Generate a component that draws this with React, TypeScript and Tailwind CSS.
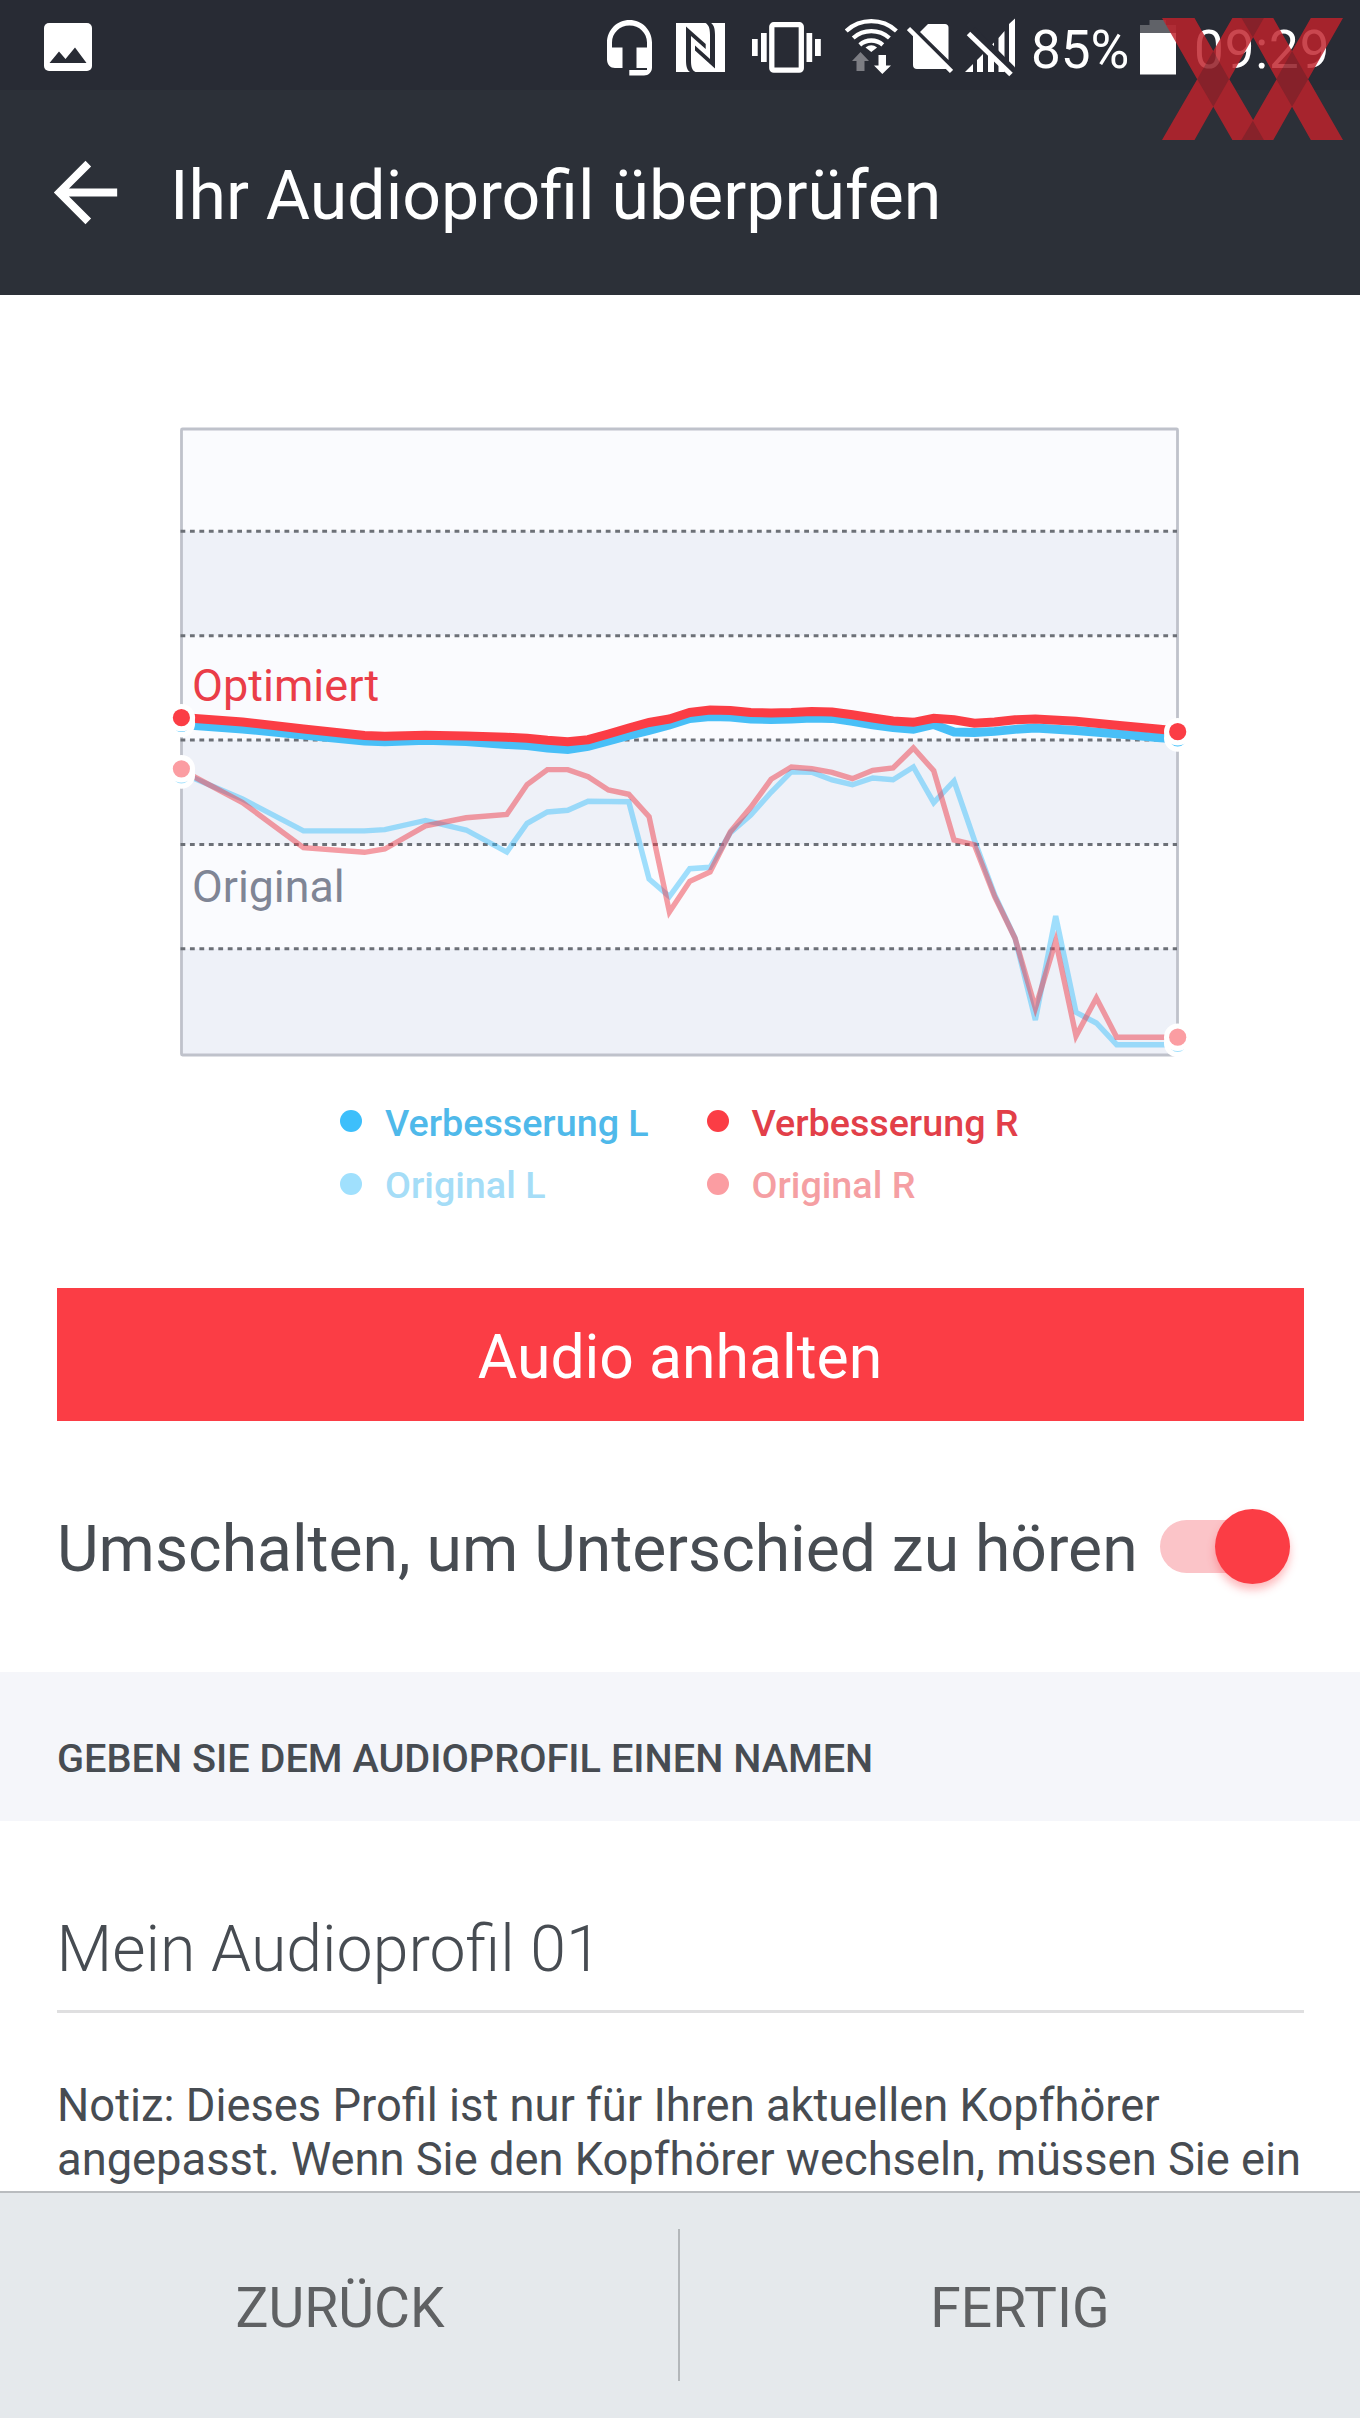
import { useState } from 'react';

const CHART_LEFT = 181.5;
const CHART_STEP = 20.33;

// [sample index, y] pairs, 50 samples across the chart
type Point = [number, number];

const improvedRight: Point[] = [
  [0, 717.5], [3, 722], [6, 729], [9, 735.5], [10, 736.3], [12, 735.3], [14, 736], [16, 737.3], [17, 738.3],
  [18, 740.3], [19, 741.7], [20, 739.7], [21, 734], [22, 728], [23, 722.5], [24, 719], [25, 712.5], [26, 710],
  [27, 710.5], [28, 712.5], [29, 713], [30, 712.5], [31, 711.5], [32, 712], [33, 714.7], [34, 718], [35, 721],
  [36, 722.3], [37, 718.3], [38, 719.7], [39, 723.3], [40, 722], [41, 719.8], [42, 719], [44, 721.3],
  [46, 725.3], [48, 729], [49, 731],
];

const improvedLeft: Point[] = [
  [0, 724.5], [3, 729], [6, 735], [9, 741], [10, 741.8], [12, 740.3], [14, 741.5], [16, 744.5], [17, 745.7],
  [18, 748], [19, 749.5], [20, 746.5], [21, 741], [22, 735.5], [23, 730.5], [24, 725], [25, 718.5], [26, 716.5],
  [27, 717], [28, 719], [29, 719.5], [30, 719.2], [31, 718], [32, 718.5], [33, 721.3], [34, 725], [35, 727.7],
  [36, 729.4], [37, 724.5], [38, 732], [39, 732.5], [40, 731.3], [41, 729.3], [42, 728], [44, 730.5],
  [46, 733.8], [48, 737.5], [49, 739],
];

const originalLeft: Point[] = [
  [0, 773], [3, 799], [6, 830.9], [9, 830.9], [10, 829.6], [12, 820.4], [14, 830], [16, 852], [17, 823.3],
  [18, 812], [19, 810.3], [20, 801.3], [22, 801.7], [23, 879], [24, 896.5], [25, 868.7], [26, 867.3],
  [27, 832.7], [28, 815], [29, 792.3], [30, 771.7], [31, 772.3], [32, 780], [33, 784.7], [34, 778], [35, 779.7],
  [36, 767], [37, 802.7], [38, 781], [39, 840], [40, 895], [41, 938], [42, 1020], [43, 916], [44, 1012.3],
  [45, 1023], [46, 1044.7], [49, 1044.7],
];

const originalRight: Point[] = [
  [0, 770], [3, 802.5], [6, 847.7], [9, 852.3], [10, 849], [12, 825.8], [14, 817.8], [16, 814.5], [17, 784.6],
  [18, 769.6], [19, 769.6], [20, 776.7], [21, 790], [22, 794.3], [23, 816.7], [24, 912], [25, 881.3],
  [26, 872], [27, 831.7], [28, 807.3], [29, 779.3], [30, 767], [31, 768.7], [32, 772.3], [33, 778.7],
  [34, 770.3], [35, 768], [36, 748], [37, 770.7], [38, 840], [39, 844.7], [40, 896.7], [41, 938.3],
  [42, 1008], [43, 941], [44, 1036], [45, 998], [46, 1037.2], [49, 1037.2],
];

const legend = [
  { label: 'Verbesserung L', dot: 'bg-[#3dbffb]', text: 'text-[#4fb9ea]' },
  { label: 'Verbesserung R', dot: 'bg-[#fb3d45]', text: 'text-[#e23f49]' },
  { label: 'Original L', dot: 'bg-[#a0e0fd]', text: 'text-[#a5ddf7]' },
  { label: 'Original R', dot: 'bg-[#fb9da2]', text: 'text-[#f59fa3]' },
];

const toPoints = (points: Point[]) => points.map(([i, y]) => `${CHART_LEFT + i * CHART_STEP},${y}`).join(' ');

function Marker({ x, y, lower, color, lowerColor }: { x: number; y: number; lower: number; color: string; lowerColor: string }) {
  return (
    <g>
      <circle cx={x} cy={lower} r="13.7" fill="#fff" />
      <circle cx={x} cy={lower} r="8.6" fill={lowerColor} />
      <circle cx={x} cy={y} r="13.7" fill="#fff" />
      <circle cx={x} cy={y} r="8.6" fill={color} />
    </g>
  );
}

function AudioChart() {
  return (
    <svg className="ml-40 mt-[125px] block h-[650px] w-[1040px]" viewBox="160 420 1040 650">
      <rect x="181.5" y="429" width="996" height="626" fill="#fafbfe" />
      <rect x="181.5" y="531.3" width="996" height="104.4" fill="#eef1f8" />
      <rect x="181.5" y="740" width="996" height="104.4" fill="#eef1f8" />
      <rect x="181.5" y="948.8" width="996" height="106" fill="#eef1f8" />
      <rect x="181.5" y="429" width="996" height="626" rx="1" fill="none" stroke="#bfc2cb" strokeWidth="2.8" />
      {[531.3, 635.7, 740, 844.4, 948.8].map((y) => (
        <line key={y} x1="180.5" x2="1177" y1={y} y2={y} stroke="#6c7077" strokeWidth="3" strokeDasharray="4.8 4.65" />
      ))}

      <g fill="none">
        <polyline points={toPoints(originalLeft)} stroke="#3dbffb" strokeOpacity="0.48" strokeWidth="5.4" />
        <polyline points={toPoints(originalRight)} stroke="#ee3d49" strokeOpacity="0.5" strokeWidth="5.4" />
        <polyline points={toPoints(improvedLeft)} stroke="#48bff7" strokeWidth="8.8" />
        <polyline points={toPoints(improvedRight)} stroke="#fb3d45" strokeWidth="9" />
      </g>

      <Marker x={181.4} y={717.7} lower={723.5} color="#fb3d45" lowerColor="#3dbffb" />
      <Marker x={1177.7} y={731.7} lower={738} color="#fb3d45" lowerColor="#3dbffb" />
      <Marker x={181.4} y={768.8} lower={775} color="#fb9da2" lowerColor="#a0e0fd" />
      <Marker x={1177.7} y={1037.2} lower={1043.5} color="#fb9da2" lowerColor="#a0e0fd" />

      <text x="192" y="701" fontSize="45" fill="#ea3d48">Optimiert</text>
      <text x="192" y="902" fontSize="44.7" fill="#7f8595">Original</text>
    </svg>
  );
}

function StatusBar() {
  return (
    <div className="flex h-[90px] shrink-0 bg-[#282b34] text-[53px] leading-[101px] text-white">
      {/* Picture notification */}
      <svg className="ml-11 h-[90px] w-12" viewBox="0 0 48 90">
        <rect y="23" width="48" height="48" rx="5" fill="#fff" />
        <path d="M5.5 63 15 51.5l6.5 7.5L31 47.5 42.5 63z" fill="#282b34" />
      </svg>

      {/* Headset */}
      <svg className="ml-[515px] h-[90px] w-[45px]" viewBox="0 0 45 90" fill="#fff">
        <path d="M22.5 20C10 20 0 30 0 42.5v17c0 5 3.5 8.5 8 8.5h7.5V47.5H5v-5c0-9.500 7.800-17 17.500-17S40 33 40 42.500v5H29.500V68H40v2H22.300v5.500H37c4.500 0 8-3.500 8-8v-25C45 30 35 20 22.500 20z" />
      </svg>

      {/* NFC */}
      <svg className="ml-6 h-[90px] w-[49px]" viewBox="0 0 49 90">
        <rect y="23" width="49" height="49" fill="#fff" />
        <path
          d="M10 26.5 29.7 44v5L15 36v25c0 5.5 1 9.5 4.5 11H14c-3-2-4-6-4-12zM39 68.5 19 50.5v-5L34 59V35c0-6-1-10-4.500-12H35c3 2 4 6 4 12z"
          fill="#282b34"
        />
      </svg>

      {/* Vibration */}
      <svg className="ml-[27px] h-[90px] w-[69px]" viewBox="0 0 69 90" fill="#fff">
        <rect x="19.8" y="24.7" width="29.5" height="45.5" rx="2" fill="none" stroke="#fff" strokeWidth="5.3" />
        <rect y="39" width="5.7" height="17" />
        <rect x="9" y="33" width="5.7" height="29" />
        <rect x="54.5" y="33" width="5.7" height="29" />
        <rect x="63" y="39" width="5.8" height="17" />
      </svg>

      {/* Wifi with traffic arrows */}
      <svg className="ml-6 h-[90px] w-[53px]" viewBox="0 0 53 90">
        <g fill="none" stroke="#fff" strokeWidth="4.3">
          <path d="M1.2 31a37 37 0 0 1 50.2 0" />
          <path d="M8.2 38a27.5 27.5 0 0 1 36.2 0" />
          <path d="M14.8 44.8a17.5 17.5 0 0 1 23 0" />
        </g>
        <path d="M20.5 47.5q5.8-4.5 11.6 0L26.3 52z" fill="#fff" />
        <path d="M15.5 52 24 61h-4.5v10h-8V61H7z" fill="#7c7d83" />
        <path d="M37.3 74 29 65.5h4.5V55H41v10.5h5z" fill="#fff" />
      </svg>

      {/* No SIM */}
      <svg className="ml-[9px] h-[90px] w-[46px]" viewBox="0 0 46 90">
        <path d="M6 34 41 69H10c-2.5 0-4-1.5-4-4zM13 32l8-8h17c2 0 3.5 1.5 3.5 3.5V60z" fill="#fff" />
        <path d="m1.5 28.5 43 43" stroke="#fff" strokeWidth="4.5" />
      </svg>

      {/* No signal */}
      <svg className="ml-3 h-[90px] w-[50px]" viewBox="0 0 50 90">
        <path d="M0 72l8-8v8zM12 72V60l6-6v18zM23 72V48.5l6-6V72zM33.5 72V38l6-7v41zM44 72V24l6-5.5V72z" fill="#fff" />
        <path d="m7 30.500 43 43" stroke="#282b34" strokeWidth="9" />
        <path d="m3.5 33.5 42.5 41" stroke="#fff" strokeWidth="5" />
      </svg>

      <span className="ml-4 w-[96px]">85%</span>

      {/* Battery */}
      <svg className="ml-[13px] h-[90px] w-9" viewBox="0 0 36 90">
        <path d="M0 25h9.5v-5H26v5h10v9H0z" fill="#606268" />
        <rect y="33" width="36" height="41.5" fill="#fff" />
      </svg>

      <span className="ml-[18px] tracking-[0.9px]">09:29</span>
    </div>
  );
}

// Overlapping XX badge in the top right corner
function Badge() {
  return (
    <svg className="absolute left-[1162px] top-[18px] h-[122px] w-[181px]" viewBox="0 0 540 366" preserveAspectRatio="none">
      <path
        d="M0 0H97L153 99 210 0H332L388 99 444 0H540L436 184 540 366H444L388 266 332 366H210L153 266 97 366H0L105 184zM201 184 272 306 342 184 272 58z"
        fill="#bf222b"
        fillOpacity="0.83"
        fillRule="evenodd"
      />
      <path d="M237 0h67l-33 58zM237 366h67l-33-58zM105 184l48-85 47 85-47 82zM341 184l47-85 48 85-48 82z" fill="#2a1a24" fillOpacity="0.25" />
    </svg>
  );
}

export default function App() {
  const [enabled, setEnabled] = useState(true);
  const [name, setName] = useState('Mein Audioprofil 01');

  return (
    <div className="relative flex h-[2418px] w-[1360px] flex-col overflow-hidden bg-white font-['Roboto',sans-serif] text-[#474c52]">
      <StatusBar />
      <header className="flex h-[205px] shrink-0 items-center bg-[#2c3038] pl-[38px] text-white">
        <svg className="h-[95px] w-[95px]" viewBox="0 0 24 24" fill="currentColor">
          <path d="M20 11H7.83l5.59-5.59L12 4l-8 8 8 8 1.41-1.41L7.83 13H20v-2z" />
        </svg>
        <h1 className="ml-[37px] whitespace-nowrap pt-[7px] text-[68px]">Ihr Audioprofil überprüfen</h1>
      </header>

      <main className="flex min-h-0 flex-1 flex-col overflow-hidden">
        <AudioChart />

        <div className="ml-[340px] mt-[22px] grid grid-cols-[366.5px_366.5px] grid-rows-[62.5px_62.5px]">
          {legend.map((item) => (
            <div key={item.label} className="flex items-center gap-[23px]">
              <span className={`mb-1 size-[22px] rounded-full ${item.dot}`} />
              <span className={`whitespace-nowrap text-[37.7px] font-medium ${item.text}`}>{item.label}</span>
            </div>
          ))}
        </div>

        <button className="mx-[56.5px] mt-[71px] h-[133px] shrink-0 bg-[#fb3d45] pt-1.5 text-[60.7px] text-white">
          Audio anhalten
        </button>

        <div className="flex h-[251px] shrink-0 items-center pl-[57px]">
          <span className="w-[1103px] whitespace-nowrap pt-[5px] text-[64.2px]">Umschalten, um Unterschied zu hören</span>
          <button
            role="switch"
            aria-checked={enabled}
            onClick={() => setEnabled(!enabled)}
            className="flex h-[53px] w-[130px] items-center rounded-full bg-[#fbc4c8]"
          >
            <span className={`size-[75px] shrink-0 rounded-full bg-[#fb3d45] shadow-[0_6px_8px_rgba(251,61,69,0.35)] ${enabled ? 'ml-[55px]' : 'ml-0'}`} />
          </button>
        </div>

        <h2 className="flex h-[149px] shrink-0 items-center bg-[#f5f6fa] pl-[57px] pt-6 text-[39.7px] font-medium">
          GEBEN SIE DEM AUDIOPROFIL EINEN NAMEN
        </h2>

        <input
          type="text"
          value={name}
          onChange={(e) => setName(e.target.value)}
          className="mx-[56.5px] h-[192px] shrink-0 border-b-[3px] border-[#dfdfe0] pt-[66px] text-[64.4px] font-light outline-none"
        />

        <p className="ml-[57px] mt-[66px] whitespace-nowrap text-[45.3px] leading-[54px]">
          Notiz: Dieses Profil ist nur für Ihren aktuellen Kopfhörer
          <br />
          angepasst. Wenn Sie den Kopfhörer wechseln, müssen Sie ein
        </p>
      </main>

      <footer className="flex h-[227px] shrink-0 items-center border-t-2 border-[#b9bcbf] bg-[#e5e9ec] text-[55.2px] text-[#5f6163]">
        <button className="w-[678px] pl-0.5 pt-[5px]">ZURÜCK</button>
        <div className="mb-0.5 h-[152px] w-0.5 bg-[#b3b7ba]" />
        <button className="flex-1 pt-[5px]">FERTIG</button>
      </footer>

      <Badge />
    </div>
  );
}
